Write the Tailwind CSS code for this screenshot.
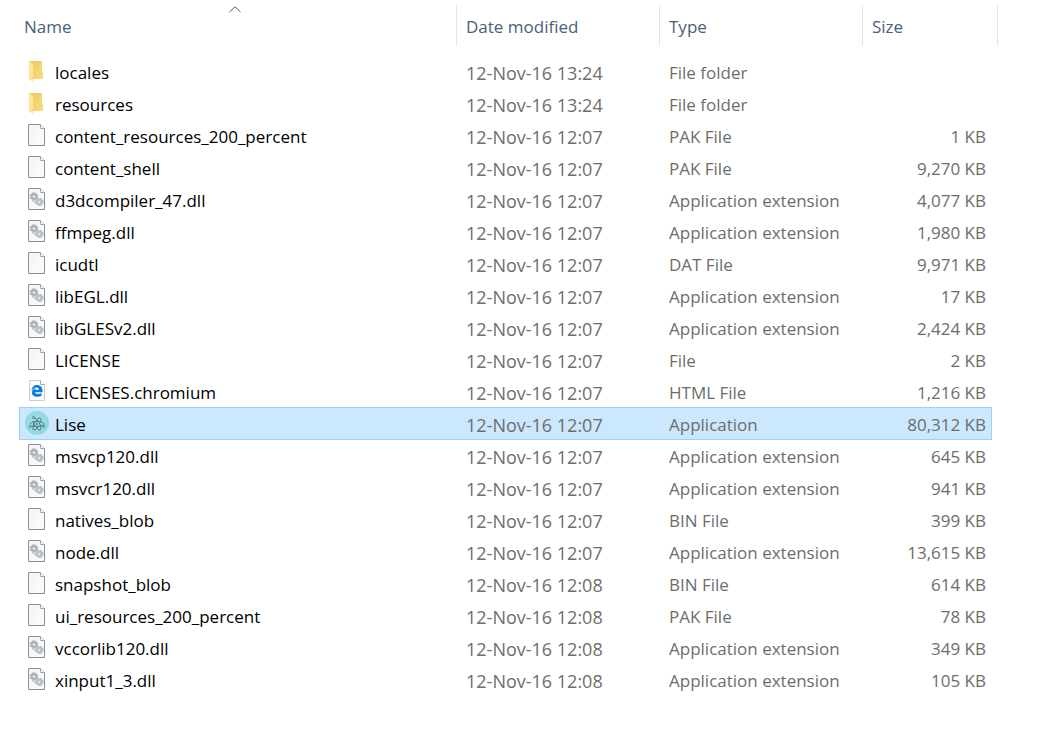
<!DOCTYPE html>
<html lang="en">
<head>
<meta charset="utf-8">
<title>Files</title>
<script src="https://cdn.jsdelivr.net/npm/@tailwindcss/browser@4"></script>
</head>
<body class="bg-white font-['Open_Sans','Noto_Sans',sans-serif] text-[17px] leading-[30px] text-[#6d6d6d]">
<svg class="absolute size-0" aria-hidden="true">
  <defs>
    <linearGradient id="paper" x1="0" y1="0" x2="1" y2="1"><stop offset="0" stop-color="#f1f3f3"/><stop offset="1" stop-color="#fdfdfd"/></linearGradient>
    <linearGradient id="gold" x1="0" y1="0" x2="1" y2="1"><stop offset="0" stop-color="#efc55c"/><stop offset="1" stop-color="#fbdc83"/></linearGradient>
    <linearGradient id="flap" x1="0" y1="0" x2="0" y2="1"><stop offset="0" stop-color="#ffe9a6"/><stop offset="1" stop-color="#ffdf87"/></linearGradient>
    <radialGradient id="disc"><stop offset="0" stop-color="#a8e2e8"/><stop offset="1" stop-color="#8dd8e2"/></radialGradient>
  </defs>
  <symbol id="folder" viewBox="0 0 24 24">
    <path d="M4 2H17V13L18 14V20H4Z" fill="url(#gold)"/>
    <path d="M4 2L8 5V23L4 20Z" fill="url(#flap)"/>
  </symbol>
  <symbol id="page" viewBox="0 0 24 24">
    <path d="M3.5 1.500H15.500L19.500 5.500V22.500H3.500Z" fill="url(#paper)" stroke="#8f8f8f"/>
    <path d="M15.500 1.500V5.500H19.500" fill="#fff" stroke="#a5a5a5"/>
  </symbol>
  <symbol id="dll" viewBox="0 0 24 24">
    <use href="#page"/>
    <circle cx="9" cy="9.500" r="2.500" fill="none" stroke="#b3b8bb" stroke-width="2"/>
    <circle cx="9" cy="9.500" r="3.700" fill="none" stroke="#8b9296" stroke-width="1" stroke-dasharray="1.500 1.400"/>
    <circle cx="9" cy="9.500" r="1.500" fill="#fff" stroke="#8b9296" stroke-width=".6"/>
    <path d="M7.500 13L11 16.500" stroke="#b3b8bb" stroke-width="2" stroke-dasharray="1.500 .8"/>
    <circle cx="14.500" cy="15" r="2.400" fill="none" stroke="#bccdd8" stroke-width="2"/>
    <circle cx="14.500" cy="15" r="3.600" fill="none" stroke="#7f8f99" stroke-width="1" stroke-dasharray="1.400 1.430"/>
    <circle cx="14.500" cy="15" r="1.400" fill="#fff" stroke="#7f8f99" stroke-width=".6"/>
  </symbol>
  <symbol id="html" viewBox="0 0 24 24">
    <path d="M4.500 1.500H15.500L19.500 5.500V21.500H4.500Z" fill="#fafafa" stroke="#cccccc"/>
    <path d="M15.500 1.500V5.500H19.500" fill="#fff" stroke="#a9a9a9"/>
    <path d="M6.500 11.500C6.800 8 9.200 6 12 6C15.500 6 17.500 8.300 17.500 11.500V13.200H10C10.300 15.100 13.500 15.600 16.500 13.900V16.800C12.500 18.800 6.900 17.800 6.900 13.400C6.900 11.300 8.300 9.800 10.300 9C9.900 9.600 9.800 10.200 9.800 10.800H14C14 7.500 9 7.800 6.500 11.500Z" fill="#0c7cdd"/>
  </symbol>
  <symbol id="electron" viewBox="0 0 24 24">
    <circle cx="12" cy="12" r="12" fill="url(#disc)"/>
    <g fill="none" stroke="#3f6a73" stroke-width=".8">
      <ellipse cx="12" cy="13" rx="6.800" ry="2.600" stroke-dasharray="13 2 20 0"/>
      <ellipse cx="12" cy="13" rx="6.800" ry="2.600" transform="rotate(60 12 13)" stroke-dasharray="12 3 20 0"/>
      <ellipse cx="12" cy="13" rx="6.800" ry="2.600" transform="rotate(120 12 13)" stroke-dasharray="20 3 12 0"/>
    </g>
    <g fill="#9bdde5" stroke="#3f6a73" stroke-width=".8">
      <circle cx="8.500" cy="6.500" r="1"/><circle cx="5.300" cy="15.500" r="1"/><circle cx="18.700" cy="15.500" r="1"/>
    </g>
    <circle cx="12" cy="13" r="1" fill="#3f6a73"/>
  </symbol>
</svg>

<main class="pt-[5px] pr-[50px] pl-[19px]">
  <table class="w-full table-fixed border-separate border-spacing-0">
    <colgroup>
      <col><col class="w-[203px]"><col class="w-[203px]"><col class="w-[129px]"><col class="w-[6px]">
    </colgroup>
    <thead class="text-left text-[#4c607a]">
      <tr>
        <th class="p-0 pb-[10px] font-normal" aria-sort="ascending">
          <button class="relative flex h-[41px] w-full items-center border-r border-[#e5e5e5] pt-[2px] pl-[5px]">Name
            <svg class="absolute top-px left-[210px] h-[7px] w-[12px]" viewBox="0 0 12 7" fill="none" stroke="#5c5c5c" aria-hidden="true"><path d="M.5 6L6 .8L11.500 6"/></svg>
          </button>
        </th>
        <th class="p-0 pb-[10px] font-normal"><button class="flex h-[41px] w-full items-center border-r border-[#e5e5e5] pt-[2px] pl-[9px]">Date modified</button></th>
        <th class="p-0 pb-[10px] font-normal"><button class="flex h-[41px] w-full items-center border-r border-[#e5e5e5] pt-[2px] pl-[9px]">Type</button></th>
        <th class="p-0 pb-[10px] font-normal"><button class="flex h-[41px] w-full items-center pt-[2px] pl-[9px]">Size</button></th>
        <td class="p-0 pb-[10px]"><div class="h-[41px] border-r border-[#e5e5e5]"></div></td>
      </tr>
    </thead>
    <tbody id="files"></tbody>
  </table>
</main>

<script>
  const kinds = { folder: 'File folder', dll: 'Application extension' };
  const files = [
    ['folder', 'locales', '13:24', kinds.folder, ''],
    ['folder', 'resources', '13:24', kinds.folder, ''],
    ['page', 'content_resources_200_percent', '12:07', 'PAK File', '1 KB'],
    ['page', 'content_shell', '12:07', 'PAK File', '9,270 KB'],
    ['dll', 'd3dcompiler_47.dll', '12:07', kinds.dll, '4,077 KB'],
    ['dll', 'ffmpeg.dll', '12:07', kinds.dll, '1,980 KB'],
    ['page', 'icudtl', '12:07', 'DAT File', '9,971 KB'],
    ['dll', 'libEGL.dll', '12:07', kinds.dll, '17 KB'],
    ['dll', 'libGLESv2.dll', '12:07', kinds.dll, '2,424 KB'],
    ['page', 'LICENSE', '12:07', 'File', '2 KB'],
    ['html', 'LICENSES.chromium', '12:07', 'HTML File', '1,216 KB'],
    ['electron', 'Lise', '12:07', 'Application', '80,312 KB'],
    ['dll', 'msvcp120.dll', '12:07', kinds.dll, '645 KB'],
    ['dll', 'msvcr120.dll', '12:07', kinds.dll, '941 KB'],
    ['page', 'natives_blob', '12:07', 'BIN File', '399 KB'],
    ['dll', 'node.dll', '12:07', kinds.dll, '13,615 KB'],
    ['page', 'snapshot_blob', '12:08', 'BIN File', '614 KB'],
    ['page', 'ui_resources_200_percent', '12:08', 'PAK File', '78 KB'],
    ['dll', 'vccorlib120.dll', '12:08', kinds.dll, '349 KB'],
    ['dll', 'xinput1_3.dll', '12:08', kinds.dll, '105 KB'],
  ];
  document.getElementById('files').innerHTML = files.map(([icon, name, time, type, size]) => {
    const on = name === 'Lise';
    const cell = on ? 'bg-[#cce8ff] shadow-[0_-1px_#99d1ff,inset_0_-1px_#99d1ff]' : '';
    const first = on ? 'border-l border-[#99d1ff] pl-[5px]' : 'pl-[6px]';
    const last = on ? 'border-r border-[#99d1ff] pr-[5px]' : 'pr-[6px]';
    return `<tr class="h-8"${on ? ' aria-selected="true"' : ''}>
      <td class="py-0 pr-0 ${first} ${cell}"><div class="flex h-8 gap-[6px] text-black"><svg class="mt-[3px] size-6 shrink-0" aria-hidden="true"><use href="#${icon}"/></svg><span class="pt-[2px]">${name}</span></div></td>
      <td class="pt-[2px] pr-0 pb-0 pl-[9px] text-[18px] ${cell}">12-Nov-16 ${time}</td>
      <td class="pt-[2px] pr-0 pb-0 pl-[9px] ${cell}">${type}</td>
      <td class="pt-[2px] pb-0 pl-0 text-right ${last} ${cell}">${size}</td>
      <td class="p-0"></td>
    </tr>`;
  }).join('');
</script>
</body>
</html>
